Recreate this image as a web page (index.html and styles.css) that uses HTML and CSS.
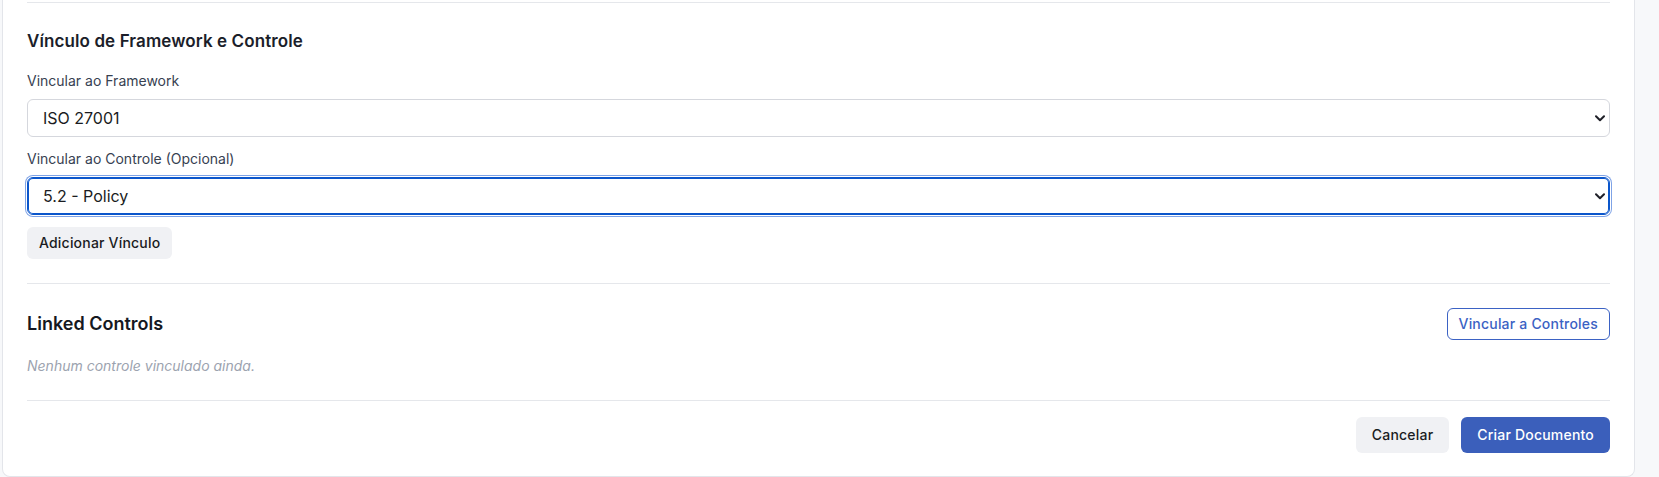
FILE: index.html
```html
<!DOCTYPE html>
<html lang="pt">
<head>
<meta charset="utf-8">
<title>Vínculo de Framework e Controle</title>
<link rel="stylesheet" href="styles.css">
</head>
<body>
<div class="page">
  <div class="card">
    <section class="section section-links">
      <h3 class="section-title title-sm">Vínculo de Framework e Controle</h3>
      <div class="field">
        <label class="field-label" for="fw">Vincular ao Framework</label>
        <div class="select-wrap">
          <select id="fw" class="select">
            <option>ISO 27001</option>
          </select>
          <svg class="chevron" width="10" height="7" viewBox="0 0 10 7"><path d="M1 1.2 L5 5.2 L9 1.2" fill="none" stroke="#1f2028" stroke-width="2" stroke-linecap="round" stroke-linejoin="round"/></svg>
        </div>
      </div>
      <div class="field">
        <label class="field-label" for="ctl">Vincular ao Controle (Opcional)</label>
        <div class="select-wrap">
          <select id="ctl" class="select select-focus">
            <option>5.2 - Policy</option>
          </select>
          <svg class="chevron" width="10" height="7" viewBox="0 0 10 7"><path d="M1 1.2 L5 5.2 L9 1.2" fill="none" stroke="#1f2028" stroke-width="2" stroke-linecap="round" stroke-linejoin="round"/></svg>
        </div>
      </div>
      <button class="btn btn-light btn-sm">Adicionar Vínculo</button>
    </section>

    <section class="section section-controls">
      <div class="row">
        <h3 class="section-title">Linked Controls</h3>
        <button class="btn btn-outline btn-sm">Vincular a Controles</button>
      </div>
      <p class="empty">Nenhum controle vinculado ainda.</p>
    </section>

    <section class="section section-footer">
      <button class="btn btn-light btn-md">Cancelar</button>
      <button class="btn btn-primary btn-md">Criar Documento</button>
    </section>
  </div>
</div>
</body>
</html>
```

FILE: styles.css
```css
* { box-sizing: border-box; }

html, body {
  margin: 0;
  padding: 0;
  background: #f7f8fa;
  font-family: "Inter", "Liberation Sans", sans-serif;
  color: #111827;
}

.page {
  padding: 0 24px 0 2px;
  height: 477px;
  overflow: hidden;
}

.card {
  background: #ffffff;
  border: 1px solid #e3e5ea;
  border-top: none;
  border-radius: 0 0 8px 8px;
  padding: 2px 24px 23px 24px;
}

.section {
  border-top: 1px solid #e5e7eb;
}

.section-links {
  padding-top: 24px;
}

.section-title {
  margin: 0;
  font-size: 18px;
  line-height: 28px;
  font-weight: 600;
  color: #151821;
}

.title-sm {
  font-size: 17px;
  letter-spacing: 0.1px;
  color: #1b1e2a;
}

.section-links .section-title {
  margin-bottom: 16px;
}

.field {
  margin-bottom: 12px;
}

.field-label {
  display: block;
  font-size: 14px;
  line-height: 20px;
  color: #374151;
  margin-bottom: 8px;
}

.select-wrap {
  position: relative;
}

.select {
  display: block;
  width: 100%;
  height: 38px;
  -webkit-appearance: none;
  appearance: none;
  background: #ffffff;
  border: 1px solid #d5d7dd;
  border-radius: 6px;
  padding: 0 30px 0 15px;
  font-family: "Inter", "Liberation Sans", sans-serif;
  font-size: 16px;
  color: #1a1c22;
  outline: none;
}

.select-focus {
  border: 1px solid #0b56cb;
  box-shadow: inset 0 0 0 1px #0b56cb, 0 0 0 1px #ffffff, 0 0 0 2px #7fa3e6;
}

.chevron {
  position: absolute;
  right: 5px;
  top: 50%;
  margin-top: -3px;
  pointer-events: none;
}

.btn {
  font-family: "Inter", "Liberation Sans", sans-serif;
  font-size: 14px;
  font-weight: 500;
  letter-spacing: 0.2px;
  border-radius: 6px;
  border: 1px solid transparent;
  cursor: pointer;
  line-height: 20px;
}

.btn-sm {
  height: 32px;
  padding: 0 11px;
}

.btn-md {
  height: 36px;
  padding: 0 15px;
}

.btn-light {
  background: #f0f1f4;
  color: #1a1c22;
}

.btn-outline {
  background: #ffffff;
  border-color: #3b62c4;
  color: #3b62c4;
}

.btn-primary {
  background: #3b5fbb;
  color: #ffffff;
}

.section-controls {
  margin-top: 24px;
  padding-top: 24px;
}

.row {
  display: flex;
  justify-content: space-between;
  align-items: center;
}

.empty {
  margin: 16px 0 0;
  font-size: 14px;
  line-height: 20px;
  font-style: italic;
  color: #9ca3af;
}

.section-footer {
  margin-top: 24px;
  padding-top: 16px;
  display: flex;
  justify-content: flex-end;
  gap: 12px;
}
```
